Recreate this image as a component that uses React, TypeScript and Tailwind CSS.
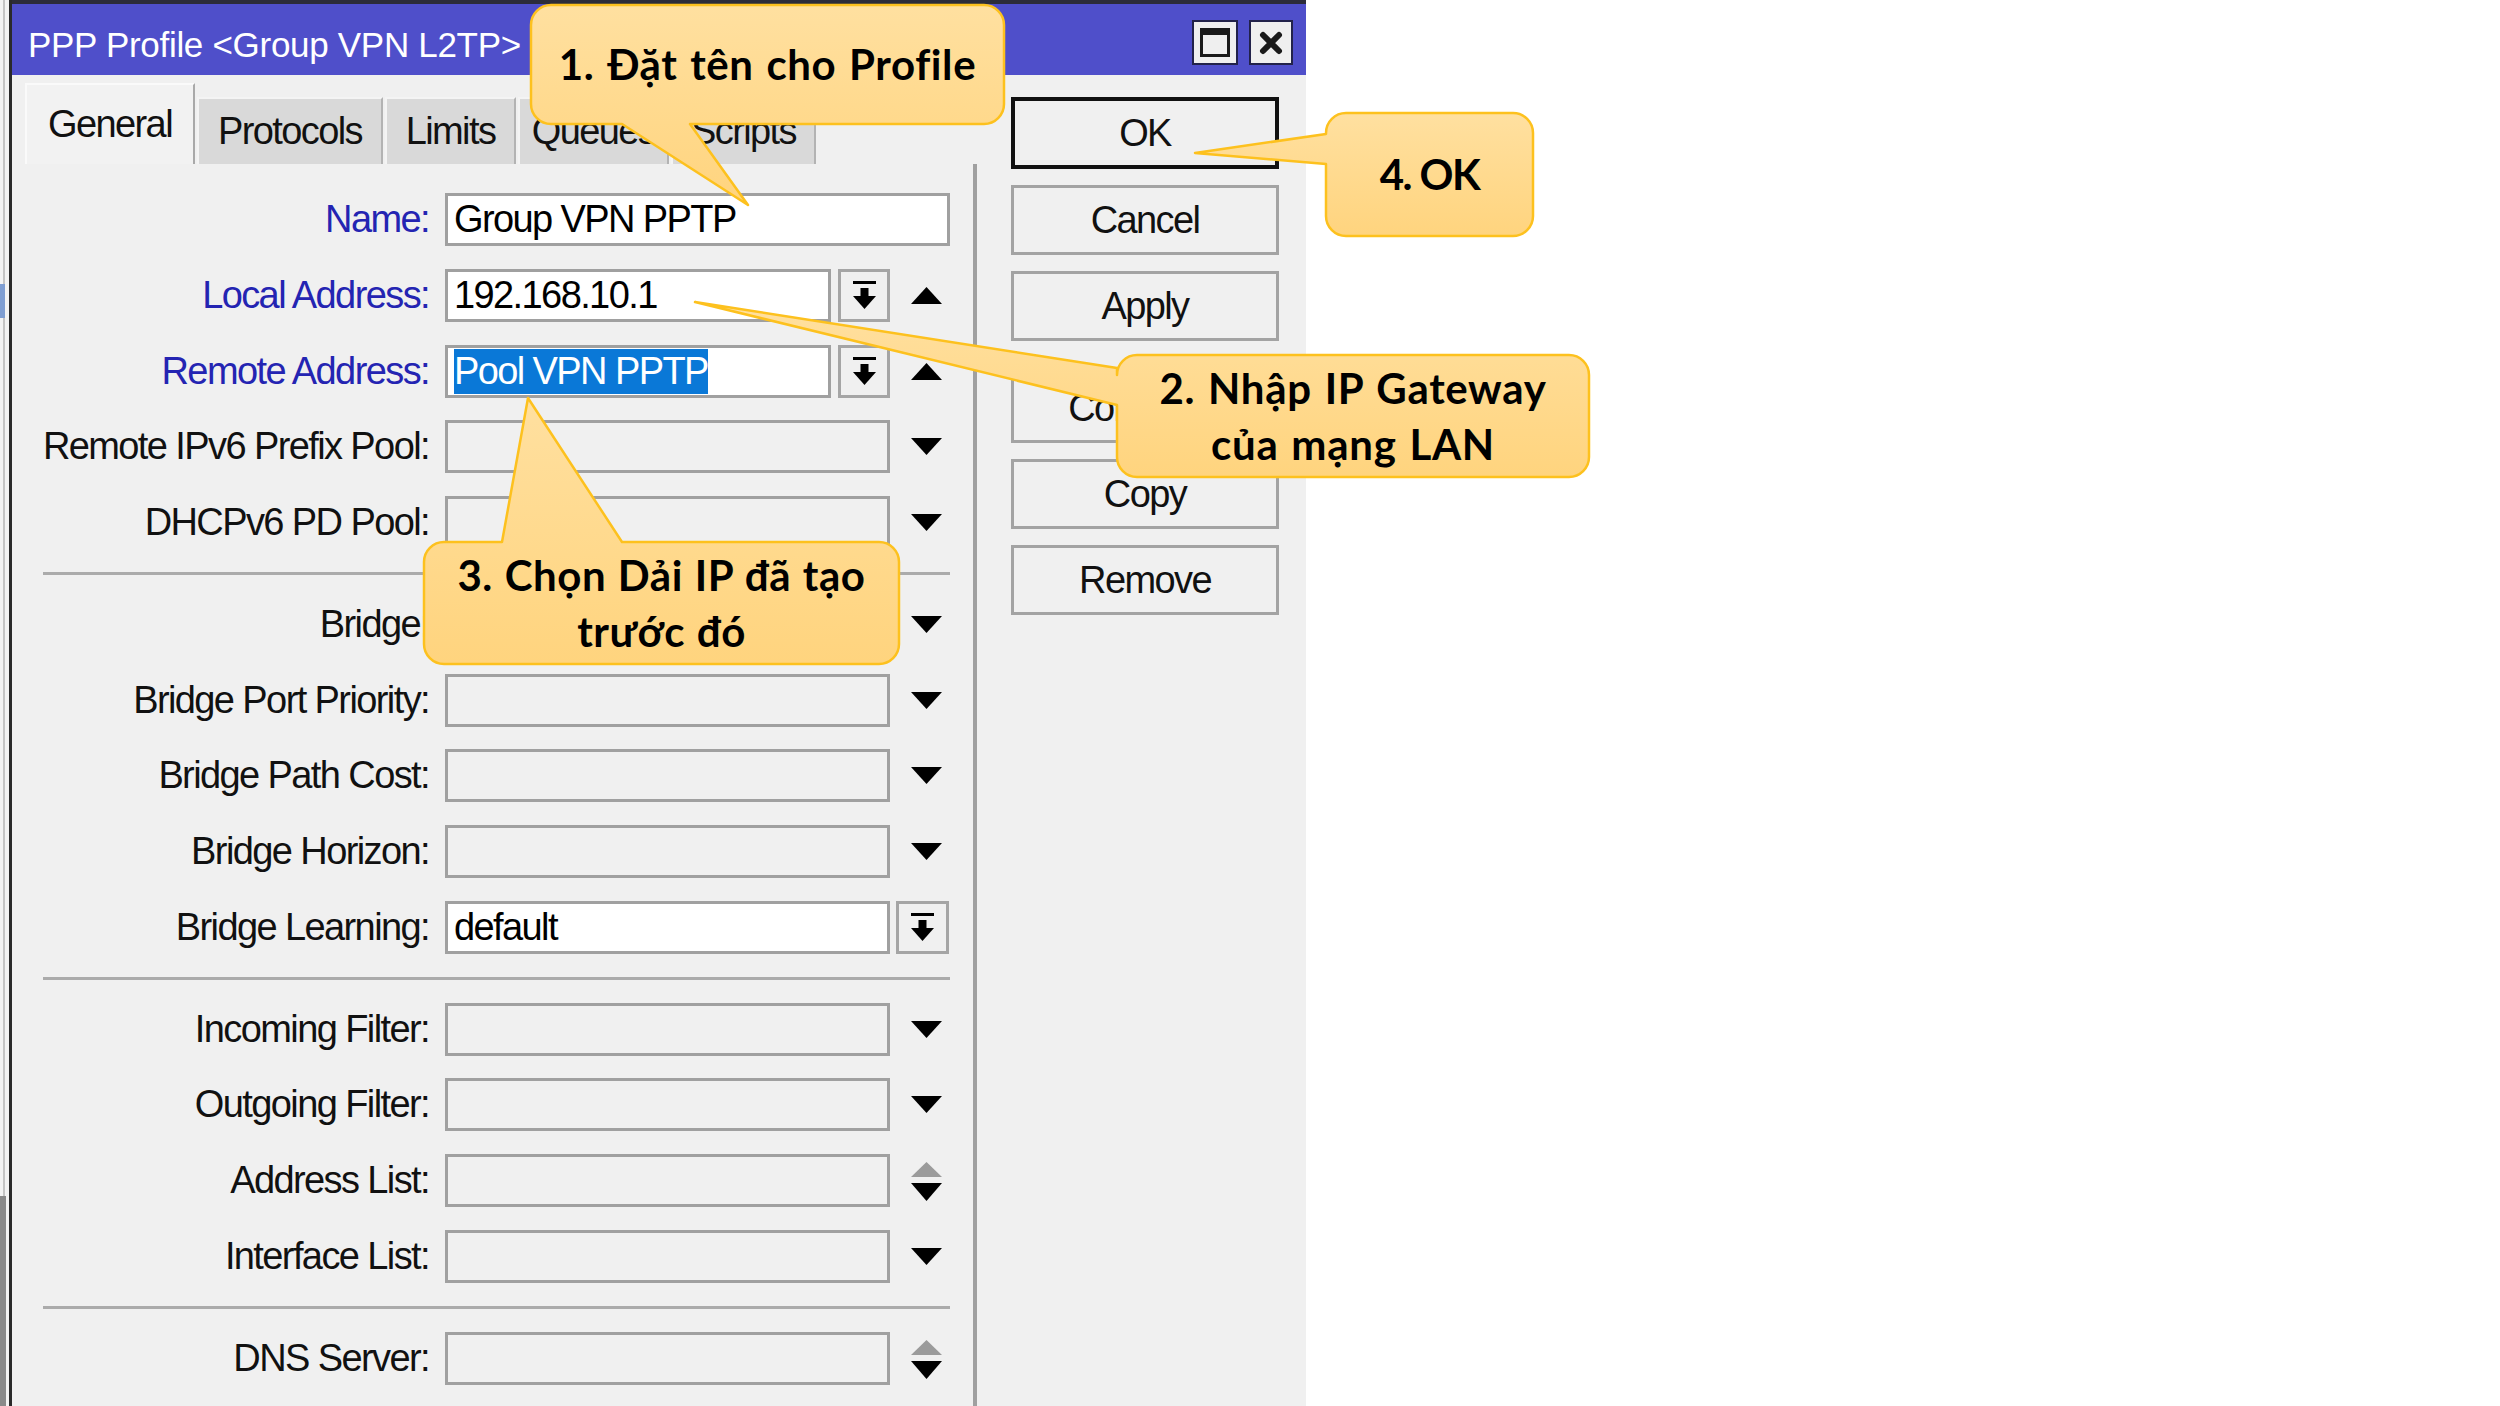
import React from "react";

type Row = {
  label: string;
  blue?: boolean;
  kind: "text" | "combo" | "drop" | "updown" | "learning";
  value?: string;
  selected?: boolean;
};

const sections: Row[][] = [
  [
    { label: "Name:", blue: true, kind: "text", value: "Group VPN PPTP" },
    { label: "Local Address:", blue: true, kind: "combo", value: "192.168.10.1" },
    { label: "Remote Address:", blue: true, kind: "combo", value: "Pool VPN PPTP", selected: true },
    { label: "Remote IPv6 Prefix Pool:", kind: "drop" },
    { label: "DHCPv6 PD Pool:", kind: "drop" },
  ],
  [
    { label: "Bridge:", kind: "drop" },
    { label: "Bridge Port Priority:", kind: "drop" },
    { label: "Bridge Path Cost:", kind: "drop" },
    { label: "Bridge Horizon:", kind: "drop" },
    { label: "Bridge Learning:", kind: "learning", value: "default" },
  ],
  [
    { label: "Incoming Filter:", kind: "drop" },
    { label: "Outgoing Filter:", kind: "drop" },
    { label: "Address List:", kind: "updown" },
    { label: "Interface List:", kind: "drop" },
  ],
  [{ label: "DNS Server:", kind: "updown" }],
];

const tabs = [
  { name: "General", active: true, w: "w-[170px]" },
  { name: "Protocols", w: "w-[186px]" },
  { name: "Limits", w: "w-[131px]" },
  { name: "Queues", w: "w-[151px]" },
  { name: "Scripts", w: "w-[145px]" },
];

const buttons = ["OK", "Cancel", "Apply", "Comment", "Copy", "Remove"];

function DownTri() {
  return (
    <svg width="31" height="17" viewBox="0 0 31 17">
      <polygon points="0,0 31,0 15.5,17" fill="#000" />
    </svg>
  );
}

function UpTri() {
  return (
    <svg width="31" height="17" viewBox="0 0 31 17">
      <polygon points="15.5,0 31,17 0,17" fill="#000" />
    </svg>
  );
}

function UpDown() {
  return (
    <svg width="31" height="53" viewBox="0 0 31 53">
      <polygon points="15.5,8 31,23 0,23" fill="#9b9b9b" />
      <polygon points="0,29 31,29 15.5,47" fill="#000" />
    </svg>
  );
}

// the small "drop to list" button: bar over a thick arrow
function ListButton({ w }: { w: string }) {
  return (
    <div className={`${w} h-full flex items-center justify-center border-[3px] border-[#a5a5a5] bg-[#f0f0f0]`}>
      <svg width="23" height="28" viewBox="0 0 23 28">
        <rect x="0" y="0" width="23" height="3" fill="#000" />
        <rect x="7.5" y="7" width="8" height="9" fill="#000" />
        <polygon points="0,15 23,15 11.5,28" fill="#000" />
      </svg>
    </div>
  );
}

function Input({ w, white, value, selected }: { w: string; white?: boolean; value?: string; selected?: boolean }) {
  return (
    <div
      className={`${w} h-full flex items-center border-[3px] border-[#a0a0a0] pl-[6px] ${
        white ? "bg-white" : "bg-[#f0f0f0]"
      }`}
    >
      {value &&
        (selected ? (
          <span className="inline-block leading-[45px] bg-[#0a78d7] text-white">{value}</span>
        ) : (
          <span className="text-black">{value}</span>
        ))}
    </div>
  );
}

function FormRow({ row }: { row: Row }) {
  return (
    <div className="flex items-center h-[53px]">
      <div className={`w-[417px] text-right ${row.blue ? "text-[#2424b2]" : "text-[#111]"}`}>{row.label}</div>
      <div className="ml-[16px] h-full flex items-center">
        {row.kind === "text" && <Input w="w-[505px]" white value={row.value} />}
        {row.kind === "combo" && (
          <>
            <Input w="w-[386px]" white value={row.value} selected={row.selected} />
            <div className="ml-[7px] h-full">
              <ListButton w="w-[52px]" />
            </div>
            <div className="ml-[21px]">
              <UpTri />
            </div>
          </>
        )}
        {row.kind === "drop" && (
          <>
            <Input w="w-[445px]" />
            <div className="ml-[21px]">
              <DownTri />
            </div>
          </>
        )}
        {row.kind === "updown" && (
          <>
            <Input w="w-[445px]" />
            <div className="ml-[21px]">
              <UpDown />
            </div>
          </>
        )}
        {row.kind === "learning" && (
          <>
            <Input w="w-[445px]" white value={row.value} />
            <div className="ml-[6px] h-full">
              <ListButton w="w-[53px]" />
            </div>
          </>
        )}
      </div>
    </div>
  );
}

function Callouts() {
  return (
    <>
      <svg className="absolute left-0 top-0" width="2500" height="1406" viewBox="0 0 2500 1406">
        <defs>
          <linearGradient id="cg" x1="0" y1="0" x2="0" y2="1">
            <stop offset="0" stopColor="#ffe0a0" />
            <stop offset="1" stopColor="#ffd47e" />
          </linearGradient>
        </defs>
        <g fill="url(#cg)" stroke="#fdc11e" strokeWidth="2.5" strokeLinejoin="round">
          {/* 1 */}
          <path d="M551,5 H984 A20 20 0 0 1 1004,25 V104 A20 20 0 0 1 984,124 H690 L748,205 L622,124 H551 A20 20 0 0 1 531,104 V25 A20 20 0 0 1 551,5 Z" />
          {/* 2 */}
          <path d="M1137,355 H1569 A20 20 0 0 1 1589,375 V457 A20 20 0 0 1 1569,477 H1137 A20 20 0 0 1 1117,457 V405 L695,302 L1117,368 V375 A20 20 0 0 1 1137,355 Z" />
          {/* 3 */}
          <path d="M444,542 H502 L528,398 L622,542 H879 A20 20 0 0 1 899,562 V644 A20 20 0 0 1 879,664 H444 A20 20 0 0 1 424,644 V562 A20 20 0 0 1 444,542 Z" />
          {/* 4 */}
          <path d="M1346,113 H1513 A20 20 0 0 1 1533,133 V216 A20 20 0 0 1 1513,236 H1346 A20 20 0 0 1 1326,216 V164 L1195,153 L1326,134 V133 A20 20 0 0 1 1346,113 Z" />
        </g>
      </svg>

      <div className="absolute left-[531px] top-[5px] w-[473px] h-[119px] flex items-center justify-center font-['Lato','Open_Sans',sans-serif] font-bold text-[42px] tracking-[0.6px] [word-spacing:2px] text-black">
        1. Đặt tên cho Profile
      </div>
      <div className="absolute left-[1117px] top-[355px] w-[472px] h-[122px] flex flex-col items-center justify-center font-['Lato','Open_Sans',sans-serif] font-bold text-[42px] leading-[56px] tracking-[0.7px] [word-spacing:2px] text-black">
        <span>2. Nhập IP Gateway</span>
        <span>của mạng LAN</span>
      </div>
      <div className="absolute left-[424px] top-[542px] w-[475px] h-[122px] flex flex-col items-center justify-center font-['Lato','Open_Sans',sans-serif] font-bold text-[42px] leading-[56px] tracking-[0.55px] [word-spacing:1px] text-black">
        <span>3. Chọn Dải IP đã tạo</span>
        <span>trước đó</span>
      </div>
      <div className="absolute left-[1326px] top-[113px] w-[207px] h-[123px] flex items-center justify-center font-['Lato','Open_Sans',sans-serif] font-bold text-[42px] text-black">
        4. OK
      </div>
    </>
  );
}

export default function App() {
  return (
    <div className="relative w-[2500px] h-[1406px] overflow-hidden bg-white flex font-['Liberation_Sans',Arial,sans-serif] text-[38px] tracking-[-1.6px]">
      {/* window behind, left edge */}
      <div className="w-[9px] h-full flex flex-col bg-[#f3f3f3]">
        <div className="h-[284px] flex">
          <div className="ml-[3px] w-[2px] h-full bg-[#c4c4c4]" />
        </div>
        <div className="h-[34px] w-[5px] bg-[#7f9ed2]" />
        <div className="flex-1 flex">
          <div className="ml-[3px] w-[2px] h-full bg-[#c4c4c4]" />
        </div>
        <div className="h-[210px] w-[6px] bg-[#8a8a8a]" />
      </div>

      {/* PPP Profile window */}
      <div className="w-[1297px] h-full flex flex-col border-l-[3px] border-[#2a2a2a] bg-[#f0f0f0]">
        {/* title bar */}
        <div className="h-[75px] flex items-center border-t-[4px] border-[#2c2c3a] bg-[#4f4fca] pl-[16px] pr-[13px] pt-[12px]">
          <div className="flex-1 text-white text-[35px] tracking-[-0.3px]">PPP Profile &lt;Group VPN L2TP&gt;</div>
          <div className="flex items-center gap-[11px] -mt-[6px]">
            <div className="w-[46px] h-[45px] flex items-center justify-center border-2 border-[#22224a] bg-[#efefef]">
              <div className="w-[30px] h-[29px] border-[3px] border-t-[7px] border-[#1a1a1a]" />
            </div>
            <div className="w-[44px] h-[45px] flex items-center justify-center border-2 border-[#22224a] bg-[#efefef]">
              <svg width="24" height="24" viewBox="0 0 24 24">
                <path d="M4 4 L20 20 M20 4 L4 20" stroke="#1a1a1a" strokeWidth="6" strokeLinecap="round" />
              </svg>
            </div>
          </div>
        </div>

        <div className="flex flex-1">
          {/* tabs + form */}
          <div className="w-[965px] flex flex-col">
            <div className="h-[89px] flex items-end gap-[2px] pl-[13px]">
              {tabs.map((t) =>
                t.active ? (
                  <div
                    key={t.name}
                    className={`${t.w} h-[81px] flex items-center justify-center bg-[#f2f2f2] border-l-2 border-t-2 border-[#fafafa] border-r-2 border-r-[#a9a9a9] text-[#111]`}
                  >
                    {t.name}
                  </div>
                ) : (
                  <div
                    key={t.name}
                    className={`${t.w} h-[67px] flex items-center justify-center bg-[#d9d9d9] border-l-2 border-t-2 border-[#f4f4f4] border-r-2 border-r-[#b3b3b3] text-[#111]`}
                  >
                    {t.name}
                  </div>
                )
              )}
            </div>
            <div className="flex-1 border-r-[4px] border-[#a0a0a0] pt-[29px] flex flex-col gap-[22.8px]">
              {sections.map((sec, i) => (
                <React.Fragment key={i}>
                  {i > 0 && <div className="ml-[31px] w-[907px] h-[3px] bg-[#ababab]" />}
                  {sec.map((r) => (
                    <FormRow key={r.label} row={r} />
                  ))}
                </React.Fragment>
              ))}
            </div>
          </div>

          {/* buttons */}
          <div className="flex-1 pt-[22px] pl-[34px] flex flex-col gap-[16px]">
            {buttons.map((b) => (
              <div
                key={b}
                className={`w-[268px] flex items-center justify-center bg-[#f0f0f0] text-[#111] ${
                  b === "OK"
                    ? "h-[72px] border-[4px] border-[#111]"
                    : "h-[70px] border-[3px] border-[#a3a3a3]"
                } ${b === "Comment" ? "mt-[16px]" : ""}`}
              >
                {b}
              </div>
            ))}
          </div>
        </div>
      </div>

      <Callouts />
    </div>
  );
}
